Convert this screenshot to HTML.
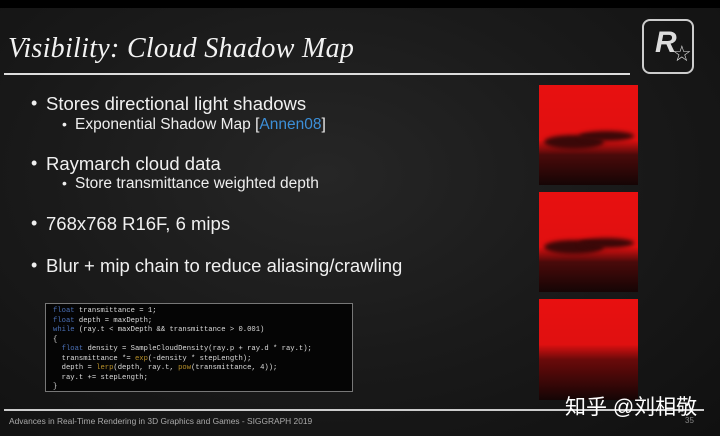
<!DOCTYPE html>
<html><head><meta charset="utf-8"><style>
*{margin:0;padding:0;box-sizing:border-box}
body{width:720px;height:436px;overflow:hidden;background:#151515;position:relative;font-family:"Liberation Sans",sans-serif;color:#eee}
.bg{position:absolute;inset:0;background:radial-gradient(ellipse at 45% 40%,#262626 0%,#1a1a1a 50%,#101010 100%)}
.topbar{position:absolute;left:0;top:0;width:720px;height:8px;background:#000}
.title{position:absolute;left:8px;top:33px;font-family:"Liberation Serif",serif;font-style:italic;font-size:28px;color:#f2f2f2;letter-spacing:0.3px}
.hr{position:absolute;left:4px;top:73px;width:626px;height:2px;background:#ddd}
.logo{position:absolute;left:642px;top:19px;width:52px;height:55px;border:2px solid #ccc;border-radius:8px}
.logo .r{position:absolute;left:11px;top:5px;font:bold 30px "Liberation Sans",sans-serif;color:#ddd;font-style:italic}
.logo .s{position:absolute;left:28px;top:20px;font-size:22px;color:#ddd}
.l1{position:absolute;left:46px;font-size:18.5px;color:#f0f0f0}
.d1{position:absolute;left:31px;font-size:18px}
.l2{position:absolute;left:75px;font-size:15.5px;color:#eee}
.d2{position:absolute;left:62px;font-size:14px}
.code{position:absolute;left:45px;top:303px;width:308px;height:89px;background:#050505;border:1px solid #777;font-family:"Liberation Mono",monospace;font-size:7.2px;line-height:9.5px;color:#ddd;padding:3px 7px;white-space:pre}
.k{color:#4a6fb5}.f{color:#b8902a}
.img{position:absolute;left:539px;width:99px;height:100px;background:linear-gradient(#e81010 0%,#e01010 55%,#4a0a0a 70%,#150505 100%)}
.cl{position:absolute;background:#3a0808;border-radius:50%;filter:blur(2px)}
.foot{position:absolute;left:4px;top:409px;width:700px;height:1.5px;background:#ccc}
.ft{position:absolute;left:9px;top:416px;font-size:8.4px;color:#aaa}
.pg{position:absolute;left:685px;top:416px;font-size:8px;color:#888}
.zh{position:absolute;left:565px;top:391px;font-family:"Liberation Sans","Noto Sans CJK SC",sans-serif;font-size:21px;color:#fff}
</style></head><body>
<div class="bg"></div><div class="topbar"></div>
<div class="title">Visibility: Cloud Shadow Map</div>
<div class="hr"></div>
<div class="logo"><span class="r">R</span><span class="s">☆</span></div>

<div class="d1" style="top:93px">•</div><div class="l1" style="top:93px">Stores directional light shadows</div>
<div class="d2" style="top:116px">•</div><div class="l2" style="top:116px">Exponential Shadow Map [<span style="color:#3c8fd8">Annen08</span>]</div>
<div class="d1" style="top:153px">•</div><div class="l1" style="top:153px">Raymarch cloud data</div>
<div class="d2" style="top:175px">•</div><div class="l2" style="top:175px">Store transmittance weighted depth</div>
<div class="d1" style="top:213px">•</div><div class="l1" style="top:213px">768x768 R16F, 6 mips</div>
<div class="d1" style="top:255px">•</div><div class="l1" style="top:255px">Blur + mip chain to reduce aliasing/crawling</div>

<div class="code"><span class="k">float</span> transmittance = 1;
<span class="k">float</span> depth = maxDepth;
<span class="k">while</span> (ray.t &lt; maxDepth &amp;&amp; transmittance &gt; 0.001)
{
  <span class="k">float</span> density = SampleCloudDensity(ray.p + ray.d * ray.t);
  transmittance *= <span class="f">exp</span>(-density * stepLength);
  depth = <span class="f">lerp</span>(depth, ray.t, <span class="f">pow</span>(transmittance, 4));
  ray.t += stepLength;
}</div>

<div class="img" style="top:85px"><div class="cl" style="left:5px;top:50px;width:60px;height:14px"></div><div class="cl" style="left:40px;top:46px;width:55px;height:10px"></div></div>
<div class="img" style="top:192px"><div class="cl" style="left:5px;top:48px;width:60px;height:14px"></div><div class="cl" style="left:40px;top:46px;width:55px;height:10px"></div></div>
<div class="img" style="top:299px;height:101px;background:linear-gradient(#e81010 0%,#e01010 45%,#6a0a0a 60%,#150505 100%)"></div>

<div class="foot"></div>
<div class="ft">Advances in Real-Time Rendering in 3D Graphics and Games - SIGGRAPH 2019</div>
<div class="pg">35</div>
<div class="zh">知乎 @刘相敬</div>
</body></html>
